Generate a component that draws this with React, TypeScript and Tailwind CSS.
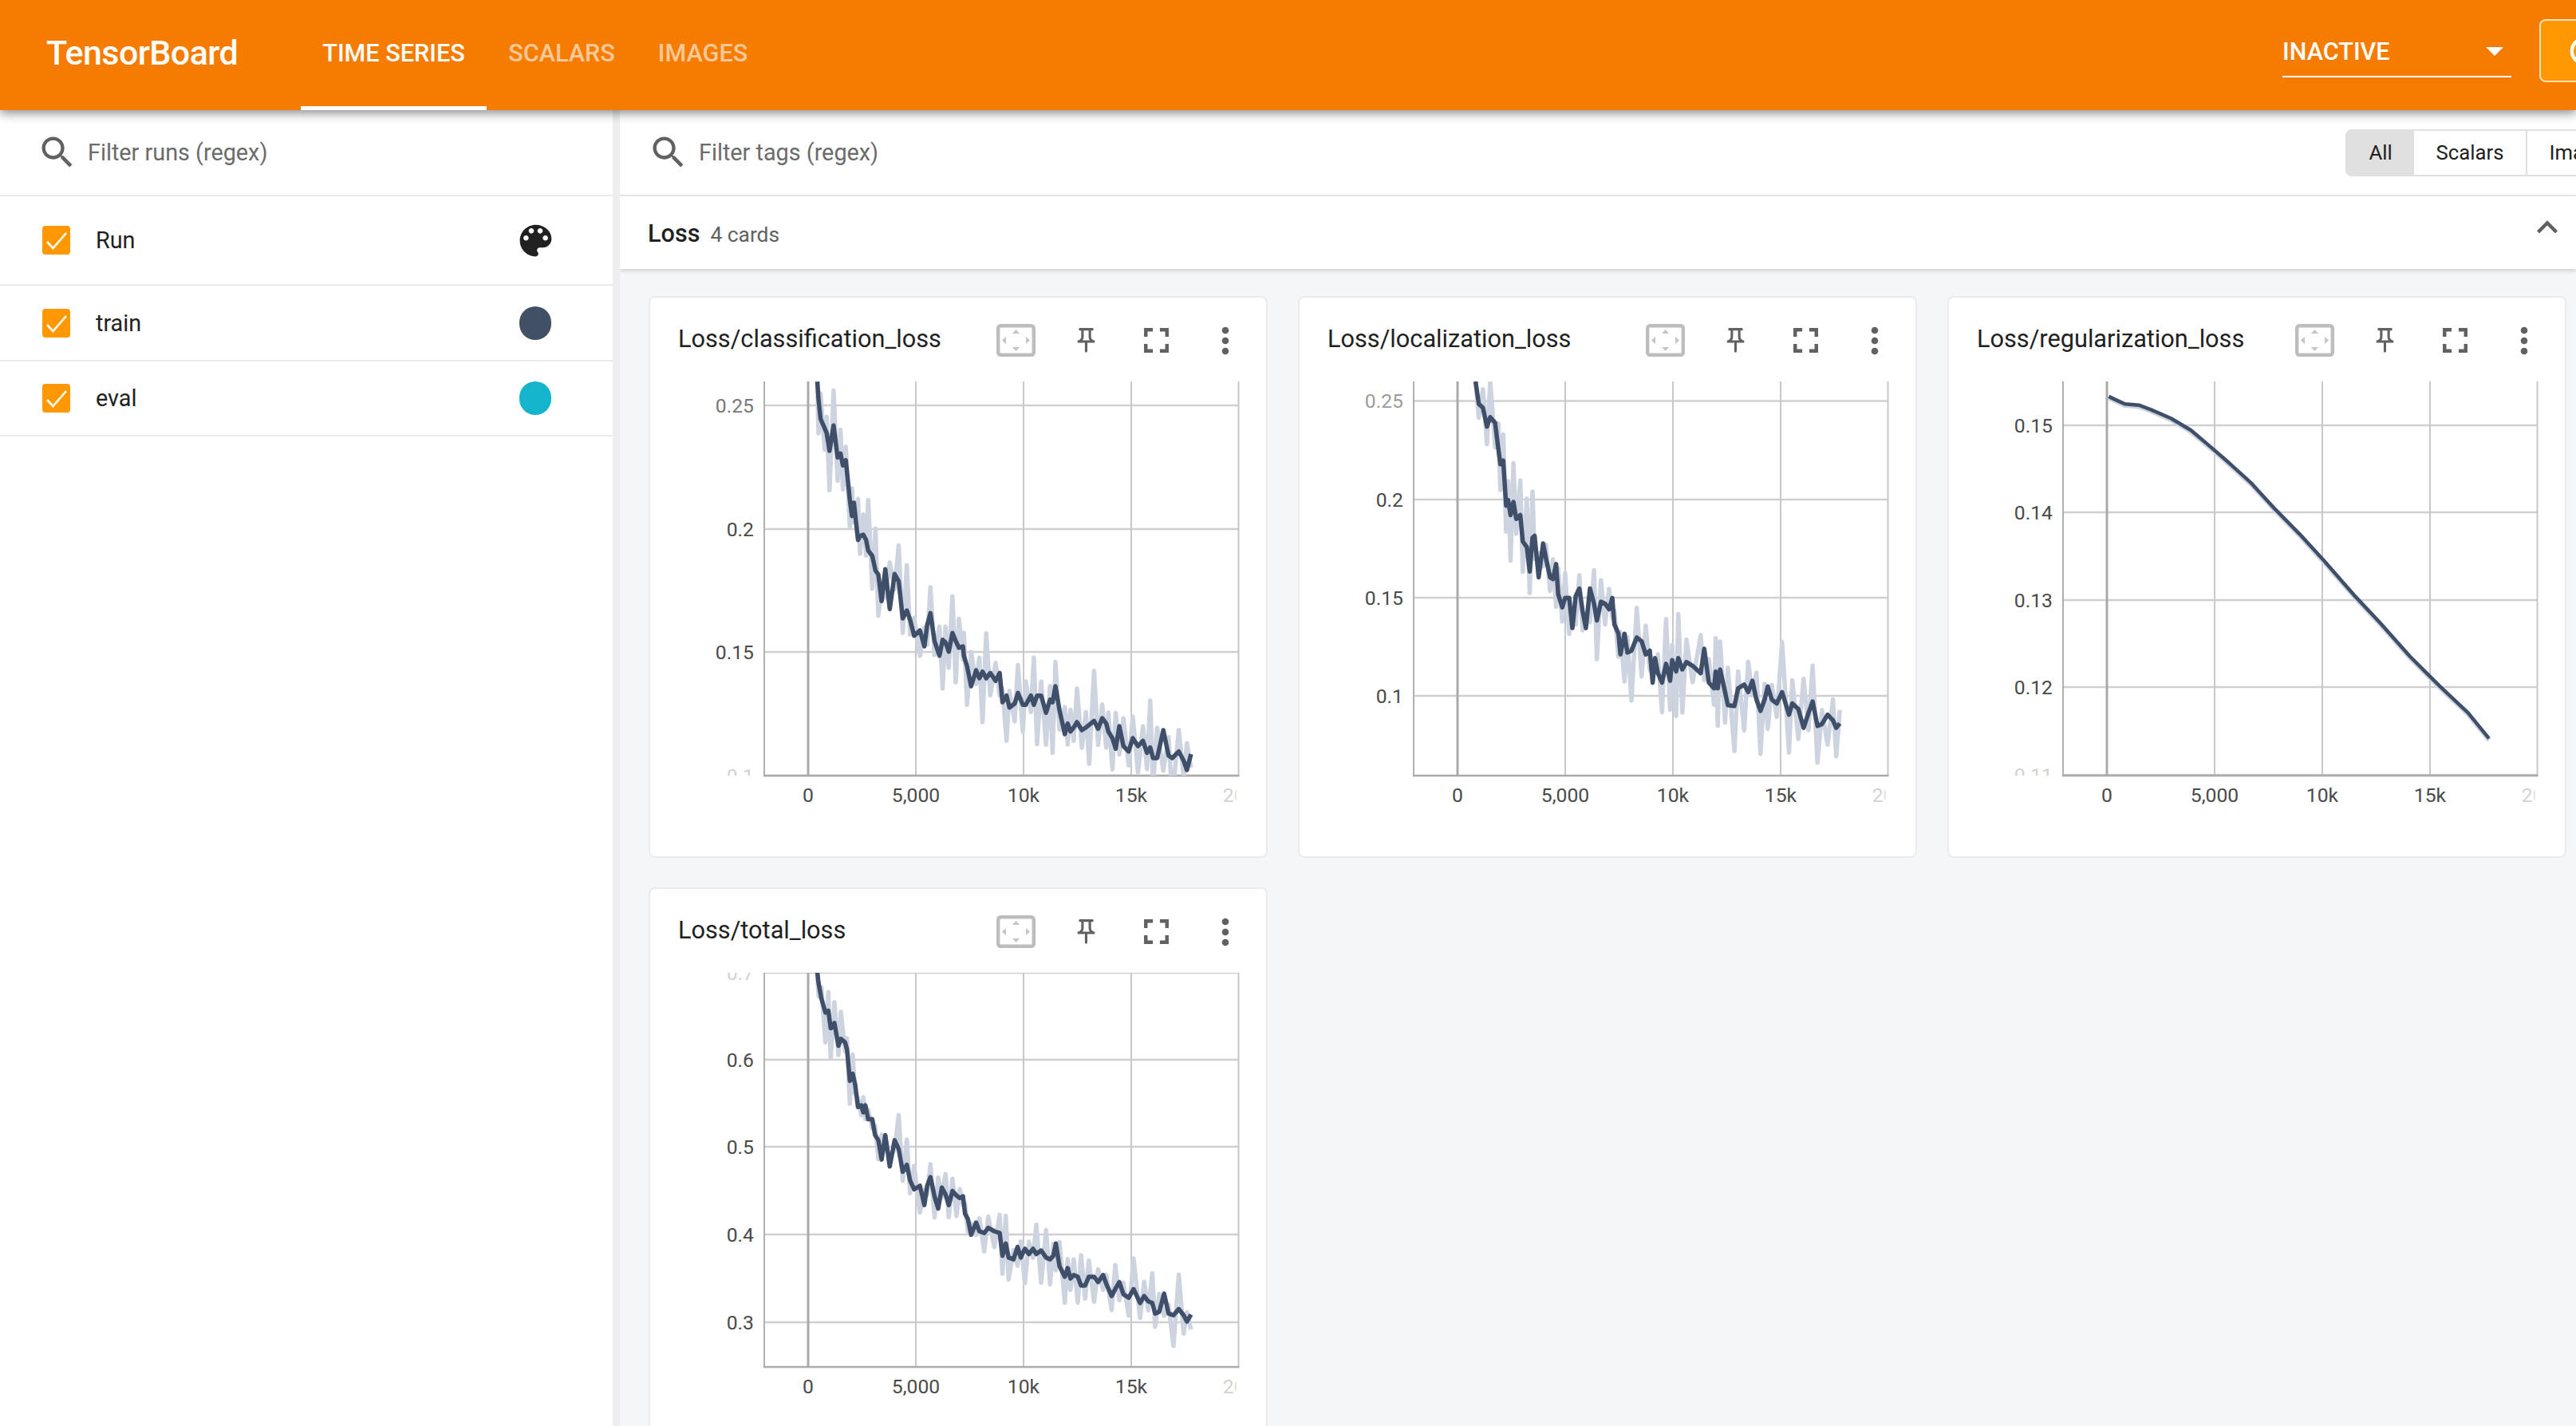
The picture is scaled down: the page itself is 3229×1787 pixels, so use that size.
import React from "react";

const D1a: number[][] = [[440,355],[443,420],[448,495],[458,530],[463,548],[470,615],[480,520],[490,640],[497,625],[503,670],[510,650],[520,800],[525,860],[530,810],[540,950],[545,935],[553,930]];
const D1b: number[][] = [[560,-10],[565,30],[575,50],[583,105],[590,120],[598,220],[607,100],[618,250],[630,118],[640,145],[650,285],[660,255],[668,290],[678,350],[692,330],[703,390],[710,310],[718,265],[728,370],[740,425],[748,365],[755,375],[763,410],[772,340],[780,370],[788,395],[798,390],[800,425],[808,465],[818,540],[830,480],[838,510],[846,485],[855,510],[865,490],[878,520],[888,490],[895,600],[905,575],[912,620],[925,605],[933,565],[945,610],[952,610],[965,575],[972,610],[980,575],[990,575],[1002,640],[1012,590],[1018,600],[1025,540],[1035,630],[1048,720],[1055,680],[1062,710],[1070,695],[1078,675],[1090,705],[1100,695],[1108,685],[1120,670],[1130,700],[1140,660],[1150,680],[1155,710],[1165,735],[1173,775],[1182,690],[1192,765],[1205,785],[1215,735],[1228,765],[1240,745],[1250,790],[1258,770],[1265,810],[1275,810],[1290,705],[1303,800],[1312,810],[1328,785],[1340,820],[1348,855],[1358,795]];
const D2: number[][] = [[452,250],[460,310],[470,320],[480,370],[488,345],[500,360],[508,430],[513,470],[520,460],[527,580],[532,565],[538,605],[545,570],[552,615],[562,605],[568,675],[578,690],[585,755],[592,665],[597,660],[607,770],[618,680],[625,720],[635,770],[642,775],[650,735],[655,815],[665,850],[672,825],[682,825],[690,905],[698,820],[707,800],[715,860],[723,905],[733,800],[743,840],[750,885],[760,835],[770,840],[780,855],[788,825],[793,895],[803,920],[808,975],[818,920],[825,970],[835,965],[848,930],[860,940],[870,975],[880,965],[887,1050],[893,985],[900,1025],[910,1050],[920,1000],[930,1045],[935,990],[945,1020],[950,985],[960,1015],[970,995],[985,1005],[1005,1025],[1014,960],[1025,1050],[1038,1065],[1042,1020],[1047,1065],[1053,1015],[1065,1075],[1072,1110],[1088,1112],[1097,1065],[1112,1055],[1122,1075],[1132,1045],[1142,1095],[1152,1125],[1162,1095],[1170,1060],[1180,1095],[1192,1105],[1205,1075],[1222,1135],[1230,1105],[1245,1120],[1258,1170],[1270,1130],[1280,1100],[1292,1165],[1303,1160],[1317,1135],[1330,1150],[1338,1170],[1347,1158]];
const D3: number[][] = [[405,290],[425,300],[445,310],[480,313],[510,325],[560,348],[610,380],[660,425],[700,462],[760,520],[820,590],[880,655],[940,725],[1020,822],[1080,890],[1155,980],[1230,1060],[1300,1130],[1352,1198]];
const D4: number[][] = [[440,270],[443,300],[450,345],[460,385],[467,380],[473,430],[482,415],[492,480],[498,460],[508,470],[513,490],[520,580],[527,560],[533,590],[540,655],[548,650],[553,670],[558,650],[565,690],[575,690],[582,735],[590,750],[598,805],[607,735],[618,825],[630,750],[640,775],[650,840],[660,820],[668,865],[678,890],[692,880],[703,935],[710,880],[718,855],[728,910],[737,945],[746,885],[755,905],[763,935],[772,895],[782,908],[790,915],[798,910],[803,960],[810,975],[818,1020],[830,985],[838,1010],[850,1015],[860,1000],[875,1010],[888,1015],[895,1080],[903,1045],[910,1085],[922,1090],[932,1055],[940,1085],[950,1060],[960,1075],[970,1060],[978,1075],[990,1065],[1002,1085],[1012,1090],[1020,1080],[1026,1045],[1035,1110],[1048,1140],[1055,1115],[1062,1145],[1070,1135],[1080,1140],[1088,1165],[1098,1165],[1107,1140],[1120,1140],[1130,1155],[1142,1135],[1150,1160],[1163,1195],[1172,1175],[1182,1155],[1192,1190],[1205,1200],[1217,1175],[1233,1215],[1243,1195],[1253,1210],[1263,1215],[1270,1245],[1280,1240],[1292,1188],[1303,1245],[1315,1250],[1328,1232],[1340,1250],[1348,1268],[1358,1248]];

type P = number[];
const line1: P[] = [
  ...D1a.map(([x, y]) => [800 + x / 1.96 - 813, 360 + y / 3 - 371]),
  ...D1b.map(([x, y]) => [800 + x / 1.96 - 813, 680 + y / 3 - 371]),
];
const line2: P[] = D2.map(([x, y]) => [1620 + x / 1.96 - 1628, 360 + y / 2.119 - 371]);
const line3: P[] = D3.map(([x, y]) => [2440 + x / 1.987 - 2441.5, 360 + y / 2.119 - 371]);
const line4: P[] = D4.map(([x, y]) => [800 + x / 1.96 - 813, 1100 + y / 2.28 - 1112]);

const toPath = (pts: P[]) => pts.map((p, i) => `${i ? "L" : "M"}${p[0].toFixed(1)} ${p[1].toFixed(1)}`).join("");

const rnd = (i: number, seed: number) => {
  const v = Math.sin(i * 12.9898 + seed * 78.233) * 43758.5453;
  return v - Math.floor(v);
};

const noisy = (pts: P[], seed: number, amp: number, top: number) =>
  pts.map((p, i) => {
    const s = i % 2 === 0 ? -1 : 1;
    const r = rnd(i, seed);
    const y = p[1] + s * amp * (0.35 + 1.0 * r * r);
    return [p[0], Math.max(top, y)];
  });

const Icon = ({ d, size, color = "#616161", className = "" }: { d: string; size: number; color?: string; className?: string }) => (
  <svg width={size} height={size} viewBox="0 0 24 24" fill={color} className={`block shrink-0 ${className}`}>
    <path d={d} />
  </svg>
);

const SEARCH = "M15.5 14h-.79l-.28-.27C15.41 12.59 16 11.11 16 9.5 16 5.91 13.09 3 9.5 3S3 5.91 3 9.5 5.91 16 9.5 16c1.61 0 3.09-.59 4.23-1.57l.27.28v.79l5 4.99L20.49 19l-4.99-5zm-6 0C7.01 14 5 11.99 5 9.5S7.01 5 9.5 5 14 7.01 14 9.5 11.99 14 9.5 14z";
const PALETTE = "M12 3c-4.97 0-9 4.03-9 9s4.03 9 9 9c.83 0 1.5-.67 1.5-1.5 0-.39-.15-.74-.39-1.01-.23-.26-.38-.61-.38-.99 0-.83.67-1.5 1.5-1.5H16c2.76 0 5-2.24 5-5 0-4.42-4.03-8-9-8zm-5.5 9c-.83 0-1.5-.67-1.5-1.5S5.67 9 6.5 9 8 9.67 8 10.5 7.33 12 6.5 12zm3-4C8.67 8 8 7.33 8 6.5S8.67 5 9.5 5s1.5.67 1.5 1.5S10.33 8 9.5 8zm5 0c-.83 0-1.5-.67-1.5-1.5S13.67 5 14.5 5s1.5.67 1.5 1.5S15.33 8 14.5 8zm3 4c-.83 0-1.5-.67-1.5-1.5S16.67 9 17.5 9s1.5.67 1.5 1.5-.67 1.5-1.5 1.5z";
const PIN = "M14 4v5c0 1.12.37 2.16 1 3H9c.65-.86 1-1.9 1-3V4h4m3-2H7c-.55 0-1 .45-1 1s.45 1 1 1h1v5c0 1.66-1.34 3-3 3v2h5.97v7l1 1 1-1v-7H19v-2c-1.66 0-3-1.34-3-3V4h1c.55 0 1-.45 1-1s-.45-1-1-1z";
const FULL = "M7 14H5v5h5v-2H7v-3zm-2-4h2V7h3V5H5v5zm12 7h-3v2h5v-5h-2v3zM14 5v2h3v3h2V5h-5z";
const MORE = "M12 8c1.1 0 2-.9 2-2s-.9-2-2-2-2 .9-2 2 .9 2 2 2zm0 2c-1.1 0-2 .9-2 2s.9 2 2 2 2-.9 2-2-.9-2-2-2zm0 6c-1.1 0-2 .9-2 2s.9 2 2 2 2-.9 2-2-.9-2-2-2z";
const CHEVRON = "M12 8l-6 6 1.41 1.41L12 10.83l4.59 4.58L18 14z";
const REFRESH = "M17.65 6.35C16.2 4.9 14.21 4 12 4c-4.42 0-7.99 3.58-7.99 8s3.57 8 7.99 8c3.73 0 6.84-2.55 7.73-6h-2.08c-.82 2.33-3.04 4-5.65 4-3.31 0-6-2.69-6-6s2.69-6 6-6c1.66 0 3.14.69 4.22 1.78L13 11h7V4l-2.35 2.35z";

const FitIcon = () => (
  <svg width="49" height="41" viewBox="0 0 49 41" className="block">
    <rect x="2.200" y="2.200" width="44.600" height="36.600" rx="3" fill="#fff" stroke="#bdbdbd" strokeWidth="4.400" />
    <path d="M24.5 7l4.500 5h-9zM24.5 34l4.500-5h-9zM7 20.500l5-4.500v9zM42 20.500l-5-4.500v9z" fill="#c4c4c4" />
  </svg>
);

const CheckBox = () => (
  <span className="flex h-[36px] w-[35px] shrink-0 items-center justify-center rounded-[4px] bg-[#ff9800]">
    <svg width="35" height="36" viewBox="0 0 35 36">
      <path d="M6 20l7.500 8L30 9" fill="none" stroke="#fff" strokeWidth="2.600" />
    </svg>
  </span>
);

type Tick = { label: string; y: number; opacity?: number };

const Chart = ({
  id, ticks, dark, light, frameTop, dw = 5.5,
}: { id: string; ticks: Tick[]; dark: P[]; light: P[]; frameTop?: boolean; dw?: number }) => {
  const xs = [200, 335, 470, 605];
  const left = 145;
  const right = 739.5;
  const top = 107;
  const bottom = 601;
  return (
    <svg width="772" height="593" viewBox="2 107 772 593" className="block" fontFamily="Roboto, sans-serif">
      <defs>
        <clipPath id={`${id}-plot`}><rect x={left} y={top} width={right - left} height={bottom - top} /></clipPath>
        <clipPath id={`${id}-labels`}><rect x={60} y={top} width={left - 60} height={bottom - top} /></clipPath>
        <clipPath id={`${id}-xlabels`}><rect x={left} y={bottom} width={right - left - 3} height={60} /></clipPath>
      </defs>
      {ticks.map((t) => (
        <line key={t.label} x1={left} x2={right} y1={t.y} y2={t.y} stroke="#cfcfcf" strokeWidth="2.500" />
      ))}
      {xs.slice(1).map((x) => (
        <line key={x} x1={x} x2={x} y1={top} y2={bottom} stroke="#c8c8c8" strokeWidth="2" />
      ))}
      <line x1={right} x2={right} y1={top} y2={bottom} stroke="#c8c8c8" strokeWidth="2" />
      {frameTop && <line x1={left} x2={right} y1={top} y2={top} stroke="#c8c8c8" strokeWidth="2" />}
      <line x1={xs[0]} x2={xs[0]} y1={top} y2={bottom} stroke="#aaaaaa" strokeWidth="3" />
      <line x1={left} x2={left} y1={top} y2={bottom} stroke="#b0b0b0" strokeWidth="2" />
      <line x1={left - 1} x2={right + 1} y1={bottom} y2={bottom} stroke="#aaaaaa" strokeWidth="2.500" />
      <g clipPath={`url(#${id}-plot)`} fill="none" strokeLinejoin="round">
        <path d={toPath(light)} stroke="#cdd4e0" strokeWidth="5.500" />
        <path d={toPath(dark)} stroke="#3f4f69" strokeWidth={dw} />
      </g>
      <g clipPath={`url(#${id}-labels)`} fontSize="24.700" textAnchor="end" fill="#4a4a4a">
        {ticks.map((t) => (
          <text key={t.label} x={132} y={t.y + 8.5} opacity={t.opacity ?? 1}>{t.label}</text>
        ))}
      </g>
      <g fontSize="24.700" textAnchor="middle" fill="#4a4a4a">
        <text x={xs[0]} y={634}>0</text>
        <text x={xs[1]} y={634}>5,000</text>
        <text x={xs[2]} y={634}>10k</text>
        <text x={xs[3]} y={634}>15k</text>
        <g clipPath={`url(#${id}-xlabels)`}>
          <text x={740} y={634} opacity={0.25}>20k</text>
        </g>
      </g>
    </svg>
  );
};

const Card = ({ title, children }: { title: string; children: React.ReactNode }) => (
  <div className="h-[704px] w-[776px] shrink-0 rounded-[8px] border-2 border-[#ebebeb] bg-white">
    <div className="flex h-[105px] items-center pl-[35px] pr-[8px]">
      <span className="flex-1 text-[30.7px] text-[#212121]">{title}</span>
      <span className="mt-[2px] flex w-[88px] justify-center"><FitIcon /></span>
      <span className="mt-[2px] flex w-[88px] justify-center"><Icon d={PIN} size={37} /></span>
      <span className="mt-[2px] flex w-[88px] justify-center"><Icon d={FULL} size={53} /></span>
      <span className="mt-[2px] flex w-[86px] justify-center"><Icon d={MORE} size={52} /></span>
    </div>
    {children}
  </div>
);

const RunRow = ({ label, h, swatch }: { label: string; h: string; swatch: React.ReactNode }) => (
  <div className={`flex ${h} items-center border-b-2 border-[#ebebeb] pl-[53px]`}>
    <CheckBox />
    <span className="ml-[32px] mt-[2px] flex-1 text-[28.8px] text-[#212121]">{label}</span>
    <span className="mr-[77px] flex w-[40px] justify-center">{swatch}</span>
  </div>
);

export default function App() {
  const light1 = noisy(line1, 1, 48, 107);
  const light2 = noisy(line2, 2, 48, 107);
  const light3 = line3.map((p) => [p[0], p[1] + 2]);
  const light4 = noisy(line4, 3, 32, 107);
  return (
    <div className="flex h-[1787px] w-[3229px] flex-col overflow-hidden bg-white font-['Roboto',sans-serif]">
      <header className="relative z-10 flex h-[138px] shrink-0 items-stretch overflow-hidden bg-[#f57c00] pl-[58px] text-white shadow-[0_4px_12px_rgba(0,0,0,0.45)]">
        <span className="flex h-[133px] w-[239px] shrink-0 items-center whitespace-nowrap text-[43px] font-medium tracking-[-0.6px]">TensorBoard</span>
        <nav className="ml-[80px] flex shrink-0">
          <span className="flex w-[233px] items-center justify-center border-b-[5px] border-white text-[30.6px] font-medium">TIME SERIES</span>
          <span className="flex w-[188px] items-center justify-center border-b-[5px] border-transparent text-[30.6px] font-medium text-white/60">SCALARS</span>
          <span className="flex w-[166px] items-center justify-center border-b-[5px] border-transparent text-[30.6px] font-medium text-white/60">IMAGES</span>
        </nav>
        <div className="ml-[1897px] mt-[36px] flex h-[61px] w-[287px] shrink-0 items-center justify-between border-b-2 border-white pb-[2px]">
          <span className="text-[30.6px] font-medium">INACTIVE</span>
          <svg width="22" height="11" viewBox="0 0 22 11" className="mr-[10px]"><path d="M0 0h22L11 11z" fill="#fff" /></svg>
        </div>
        <div className="ml-[35px] mt-[24px] flex h-[79px] w-[120px] shrink-0 items-center rounded-[8px] border-2 border-white/70 bg-[#ff9800] pl-[28px]">
          <Icon d={REFRESH} size={52} color="#fff" />
        </div>
      </header>

      <div className="flex min-h-0 flex-1">
        <aside className="w-[777px] shrink-0 border-r-[9px] border-[#eeeeee] bg-white">
          <div className="flex h-[108px] items-center border-b-2 border-[#ebebeb] pl-[46px]">
            <Icon d={SEARCH} size={52} />
            <span className="ml-[12px] mt-[2px] text-[28.8px] text-[#6b6b6b]">Filter runs (regex)</span>
          </div>
          <RunRow label="Run" h="h-[112px]" swatch={<Icon d={PALETTE} size={53} color="#212121" />} />
          <RunRow label="train" h="h-[95px]" swatch={<span className="block h-[42px] w-[42px] rounded-full bg-[#425066]" />} />
          <RunRow label="eval" h="h-[94px]" swatch={<span className="block h-[42px] w-[42px] rounded-full bg-[#12b5cb]" />} />
        </aside>

        <main className="flex min-w-0 flex-1 flex-col overflow-hidden bg-[#f5f6f7]">
          <div className="flex h-[108px] shrink-0 items-center border-b-2 border-[#ebebeb] bg-white">
            <div className="flex w-[2163px] shrink-0 items-center pl-[35px]">
              <Icon d={SEARCH} size={52} />
              <span className="ml-[12px] mt-[2px] text-[28.8px] text-[#6b6b6b]">Filter tags (regex)</span>
            </div>
            <div className="flex h-[59px] shrink-0 rounded-l-[8px] border-2 border-[#e0e0e0] bg-white text-[25.700px] text-[#212121]">
              <span className="flex w-[84px] items-center justify-center bg-[#e0e0e0]">All</span>
              <span className="flex w-[142px] items-center justify-center border-r-2 border-[#e0e0e0]">Scalars</span>
              <span className="flex w-[140px] items-center justify-center">Images</span>
            </div>
          </div>
          <div className="relative flex h-[91px] shrink-0 items-center justify-between bg-white pl-[35px] pr-[10px] shadow-[0_2px_6px_rgba(0,0,0,0.18)]">
            <div className="mt-[3px] flex items-baseline gap-[13px]">
              <span className="text-[30.6px] font-medium text-[#212121]">Loss</span>
              <span className="text-[26.4px] text-[#616161]">4 cards</span>
            </div>
            <Icon d={CHEVRON} size={52} className="mb-[14px]" />
          </div>
          <div className="flex min-h-0 flex-1 flex-col gap-[37px] pl-[36px] pt-[34px]">
            <div className="flex shrink-0 gap-[38px]">
              <Card title="Loss/classification_loss">
                <Chart id="c1" dark={line1} light={light1} ticks={[
                  { label: "0.25", y: 137, opacity: 0.75 },
                  { label: "0.2", y: 292 },
                  { label: "0.15", y: 446 },
                  { label: "0.1", y: 601, opacity: 0.25 },
                ]} />
              </Card>
              <Card title="Loss/localization_loss">
                <Chart id="c2" dark={line2} light={light2} ticks={[
                  { label: "0.25", y: 131.500, opacity: 0.55 },
                  { label: "0.2", y: 255 },
                  { label: "0.15", y: 378 },
                  { label: "0.1", y: 501 },
                ]} />
              </Card>
              <Card title="Loss/regularization_loss">
                <Chart id="c3" dw={4.5} dark={line3} light={light3} ticks={[
                  { label: "0.15", y: 162 },
                  { label: "0.14", y: 271 },
                  { label: "0.13", y: 381 },
                  { label: "0.12", y: 490 },
                  { label: "0.11", y: 600, opacity: 0.25 },
                ]} />
              </Card>
            </div>
            <div className="flex shrink-0 gap-[38px]">
              <Card title="Loss/total_loss">
                <Chart id="c4" frameTop dark={line4} light={light4} ticks={[
                  { label: "0.7", y: 107, opacity: 0.25 },
                  { label: "0.6", y: 216 },
                  { label: "0.5", y: 325 },
                  { label: "0.4", y: 435 },
                  { label: "0.3", y: 545 },
                ]} />
              </Card>
            </div>
          </div>
        </main>
      </div>
    </div>
  );
}
